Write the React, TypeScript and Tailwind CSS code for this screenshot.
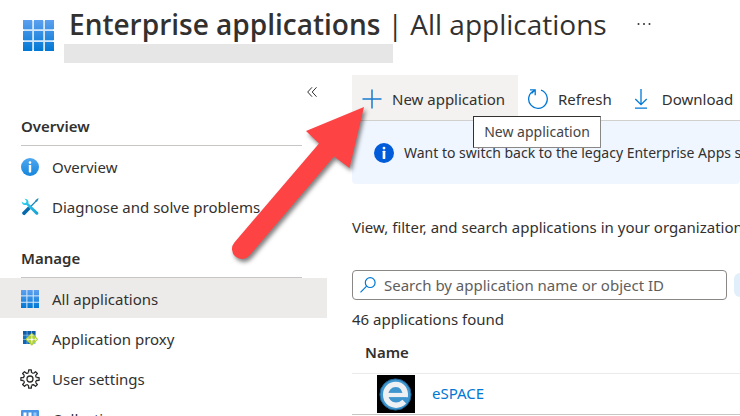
import type { ReactNode } from "react";

function GridIcon({ id, className }: { id: string; className?: string }) {
  const cells = [0, 11, 22];
  return (
    <svg viewBox="0 0 31 31" className={className} aria-hidden="true">
      <defs>
        <linearGradient id={id} x1="0" y1="31" x2="0" y2="0" gradientUnits="userSpaceOnUse">
          <stop offset="0" stopColor="#0078d4" />
          <stop offset="1" stopColor="#5ea0ef" />
        </linearGradient>
      </defs>
      <rect x="1" y="1" width="29" height="29" fill="#d3e6f8" />
      {cells.map((x) =>
        cells.map((y) => (
          <rect key={`${x}-${y}`} x={x} y={y} width="9.2" height="9.2" fill={`url(#${id})`} />
        ))
      )}
    </svg>
  );
}

function InfoIcon({ className, top, bottom }: { className?: string; top: string; bottom: string }) {
  const id = `info-${top.slice(1)}`;
  return (
    <svg viewBox="0 0 18 18" className={className} aria-hidden="true">
      <defs>
        <linearGradient id={id} x1="0" y1="0" x2="0" y2="1">
          <stop offset="0" stopColor={top} />
          <stop offset="1" stopColor={bottom} />
        </linearGradient>
      </defs>
      <circle cx="9" cy="9" r="9" fill={`url(#${id})`} />
      <circle cx="9" cy="4.6" r="1.3" fill="#fff" />
      <rect x="7.8" y="7" width="2.4" height="7.4" rx="0.4" fill="#fff" />
    </svg>
  );
}

function ToolsIcon() {
  return (
    <svg viewBox="0 0 18 18" className="size-[18px]" aria-hidden="true">
      <defs>
        <linearGradient id="wrench" x1="0" y1="0" x2="1" y2="1">
          <stop offset="0" stopColor="#32d4f5" />
          <stop offset="1" stopColor="#1a9fd0" />
        </linearGradient>
      </defs>
      <path d="M17.6 0.7 L17 0.3 L14.6 2 L14 3.2 L8 9.2 L9 10.2 L15 4.1 L16.2 3.5 Z" fill="#1b87b8" />
      <path d="M7.1 8.5 L9.6 11 L4 16.8 C2.8 18 0.2 15.6 1.4 14.3 Z" fill="#0669ab" />
      <path
        d="M5.2 0.9 C7.2 1.6 7.9 3.5 7.3 5.3 L17 14.2 C18.2 15.5 16.5 17.6 14.9 16.5 L5.5 6.9 C3.2 7.7 0.8 6.3 0.6 3.4 L3.1 5.2 L5 4.8 L5.5 3 L3.5 0.8 Z"
        fill="url(#wrench)"
      />
    </svg>
  );
}

function ProxyIcon() {
  return (
    <svg viewBox="0 0 18 18" className="size-[18px]" aria-hidden="true">
      <rect x="2" y="1" width="12.5" height="13" fill="#8fc3ea" />
      <path d="M2 1h3.7v3.7H2zM6.4 1h3.7v3.7H6.4zM10.8 1h3.7v3.7h-3.7z" fill="#0f5ba7" />
      <path d="M2 5.4h3.7v3.9H2zM6.4 5.4h3.7v3.9H6.4zM10.8 5.4h3.7v3.9h-3.7z" fill="#1272c4" />
      <path d="M2 10h3.7v4H2zM6.4 10h3.7v4H6.4z" fill="#0f66b5" />
      <path d="M10.8 2.7 17.2 9.2 10.8 15.8 4.4 9.2Z" fill="#b1d137" />
      <path
        d="M10.8 4.5v3.5M9.5 5.8l1.3-1.3 1.3 1.3M6.2 9.4h9.2M7.5 8.2 6.2 9.4l1.3 1.2M14.1 8.2l1.3 1.2-1.3 1.2M10.8 9.4v3.9"
        fill="none"
        stroke="#fff"
        strokeWidth="0.7"
      />
      <circle cx="10.8" cy="9.4" r="1.2" fill="#fff" />
    </svg>
  );
}

function GearIcon() {
  const teeth = [0, 45, 90, 135, 180, 225, 270, 315];
  return (
    <svg viewBox="0 0 20 20" className="size-5" aria-hidden="true">
      <g fill="none" stroke="#2b2a29" strokeWidth="1.3" strokeLinejoin="round">
        {teeth.map((angle) => (
          <path
            key={angle}
            transform={`rotate(${angle} 10 10)`}
            d="M8.5 3.4 8.7 0.9h2.6l.2 2.5q1.2 1.2 2.1.9"
          />
        ))}
        <circle cx="10" cy="10" r="3" />
      </g>
    </svg>
  );
}

function CollectionsIcon() {
  return (
    <svg viewBox="0 0 18 18" className="size-[18px]" aria-hidden="true">
      <rect width="18" height="18" rx="1" fill="#4a96e6" />
      <path d="M2.5 2.5h3v13h-3zM7.5 2.5h3v13h-3z" fill="#fff" />
      <path d="M12.5 2.5h3v13h-3z" fill="#9cc8f5" />
    </svg>
  );
}

function PlusIcon() {
  return (
    <svg viewBox="0 0 20 20" className="size-5" fill="none" stroke="#1a7bd0" strokeWidth="1.5" aria-hidden="true">
      <path d="M10 0.5v19M0.5 10h19" />
    </svg>
  );
}

function RefreshIcon() {
  return (
    <svg viewBox="0 0 20 20" className="size-5" fill="none" stroke="#0078d4" strokeWidth="1.3" aria-hidden="true">
      <path d="M13 1.2a9.3 9.3 0 1 1-6.8.3" />
      <path d="M2 0.9h5.2v5.3M7 1 3.5 4.5" />
    </svg>
  );
}

function DownloadIcon() {
  return (
    <svg viewBox="0 0 14 20" className="h-5 w-3.5" fill="none" stroke="#0078d4" strokeWidth="1.3" aria-hidden="true">
      <path d="M7 0v15.5M1.3 10 7 15.7l5.7-5.7M1 19.2h12" />
    </svg>
  );
}

function SearchIcon() {
  return (
    <svg viewBox="0 0 16 16" className="size-4 shrink-0" fill="none" stroke="#0078d4" strokeWidth="1.2" aria-hidden="true">
      <circle cx="10.2" cy="5.6" r="4.9" />
      <path d="M6.6 9.2 0.5 15.3" />
    </svg>
  );
}

function EspaceLogo() {
  return (
    <svg viewBox="0 0 38 38" className="size-[38px]" aria-hidden="true">
      <rect width="38" height="38" fill="#000" />
      <circle cx="18.5" cy="19.5" r="15.6" fill="#3f96cf" stroke="#1d5f8f" strokeWidth="1" />
      <g fill="none" stroke="#eef1f3">
        <path d="M9 20h21.3" strokeWidth="4.2" />
        <path
          d="M28.2 22c.8-8-3.4-12.6-9.5-12.6-5.8 0-10 4.3-10 10.3s4.3 10.5 10.4 10.5c3.2 0 5.8-1.3 8.2-3.6"
          strokeWidth="5.4"
        />
      </g>
    </svg>
  );
}

function Arrow() {
  return (
    <svg
      viewBox="0 0 150 170"
      className="pointer-events-none absolute left-[225px] top-[100px] h-[170px] w-[150px]"
      aria-hidden="true"
    >
      <path
        d="M139 7 81 31 94 43.5 9.4 142.5A9.8 9.8 0 0 0 24.5 155.5L109 56.5 124.5 68Z"
        fill="#fe4344"
        className="drop-shadow-[2px_3px_2px_rgba(0,0,0,0.5)]"
      />
    </svg>
  );
}

function NavGroup({ title, children }: { title: string; children: ReactNode }) {
  return (
    <section>
      <h2 className="ml-[21px] mr-[25px] h-[30px] border-b border-[#c8c6c4] font-semibold leading-5">
        {title}
      </h2>
      <ul>{children}</ul>
    </section>
  );
}

function NavItem({ label, icon, active }: { label: string; icon: ReactNode; active?: boolean }) {
  return (
    <li>
      <a
        href="#"
        aria-current={active ? "page" : undefined}
        className={
          active
            ? "flex h-10 items-center gap-3 bg-[#edebe9] pl-5 pt-0.5"
            : "flex h-10 items-center gap-3 pl-5 pt-0.5"
        }
      >
        <span className="flex w-5 justify-center">{icon}</span>
        {label}
      </a>
    </li>
  );
}

function Sidebar() {
  return (
    <nav className="w-[327px] shrink-0">
      <div className="flex h-[41px] items-start justify-end pr-[5px] pt-[7px]">
        <button type="button" aria-label="Collapse menu" className="flex size-5 items-center justify-center">
          <svg viewBox="0 0 10 10" className="size-2.5" fill="none" stroke="#323130" aria-hidden="true">
            <path d="M5 0.3 0.7 5 5 9.7M9.5 0.3 5.2 5l4.3 4.7" />
          </svg>
        </button>
      </div>
      <div className="flex flex-col gap-[22px]">
        <NavGroup title="Overview">
          <NavItem
            label="Overview"
            icon={<InfoIcon className="size-[18px]" top="#4fa8f0" bottom="#1585dc" />}
          />
          <NavItem label="Diagnose and solve problems" icon={<ToolsIcon />} />
        </NavGroup>
        <NavGroup title="Manage">
          <NavItem label="All applications" icon={<GridIcon id="nav-grid" className="size-[18px]" />} active />
          <NavItem label="Application proxy" icon={<ProxyIcon />} />
          <NavItem label="User settings" icon={<GearIcon />} />
          <NavItem label="Collections" icon={<CollectionsIcon />} />
        </NavGroup>
      </div>
    </nav>
  );
}

function Toolbar() {
  return (
    <div className="flex h-[46px] border-b border-[#d2d0ce]">
      <div className="relative">
        <button type="button" className="flex h-full w-[166px] items-center gap-2.5 bg-[#f3f2f1] pl-2.5 pt-0.5">
          <PlusIcon />
          New application
        </button>
        <div
          role="tooltip"
          className="absolute left-[121px] top-[41px] z-10 flex h-8 w-32 items-center justify-center whitespace-nowrap border border-[#8a8886] border-l-[#323130] border-t-[#323130] bg-white text-sm text-[#444]"
        >
          New application
        </div>
      </div>
      <button type="button" className="flex items-center gap-2.5 pl-2.5 pt-0.5">
        <RefreshIcon />
        Refresh
      </button>
      <button type="button" className="flex items-center gap-3.5 pl-[22px] pt-0.5">
        <DownloadIcon />
        Download
      </button>
    </div>
  );
}

function AppTable() {
  return (
    <table className="w-full border-collapse">
      <thead>
        <tr className="h-10 border-b border-[#edebe9]">
          <th scope="col" className="pb-0.5 pl-[13px] text-left font-semibold">
            Name
          </th>
        </tr>
      </thead>
      <tbody>
        <tr className="h-[41px] border-b border-[#c8c6c4]">
          <td>
            <div className="flex items-center gap-[17px] pl-[25px]">
              <EspaceLogo />
              <a href="#" className="pb-0.5 text-[#0078d4]">
                eSPACE
              </a>
            </div>
          </td>
        </tr>
      </tbody>
    </table>
  );
}

export default function App() {
  return (
    <div className="relative h-screen overflow-hidden bg-white font-['Noto_Sans','Open_Sans',sans-serif] text-[15px] leading-5 text-[#323130]">
      <header className="flex h-[75px] items-start">
        <GridIcon id="header-grid" className="ml-[23px] mt-5 size-[31px] shrink-0" />
        <div className="ml-2.5 shrink-0">
          <div className="flex h-11 items-center gap-[30px] pl-[5px] pt-1">
            <h1 className="whitespace-nowrap font-['Open_Sans',sans-serif] text-[28px] leading-10">
              <span className="font-semibold">Enterprise applications</span> | All applications
            </h1>
            <button type="button" aria-label="More options" className="flex h-8 items-center">
              <svg viewBox="0 0 14 4" className="h-1 w-3.5" fill="#323130" aria-hidden="true">
                <circle cx="1.5" cy="2" r="1" />
                <circle cx="7" cy="2" r="1" />
                <circle cx="12.5" cy="2" r="1" />
              </svg>
            </button>
          </div>
          <div className="h-[19px] w-[329px] bg-[#e7e6e6]" />
        </div>
      </header>

      <div className="flex">
        <Sidebar />
        <main className="ml-[25px] min-w-0 flex-1 whitespace-nowrap">
          <Toolbar />
          <div className="flex h-[63px] items-center gap-2.5 overflow-hidden rounded-b-sm bg-[#f0f6ff] pl-[22px] text-sm">
            <InfoIcon className="size-5 shrink-0" top="#015cda" bottom="#015cda" />
            Want to switch back to the legacy Enterprise Apps search experience?
          </div>
          <p className="mt-[33px]">View, filter, and search applications in your organization</p>
          <div className="mt-[33px] flex gap-[7px]">
            <label className="flex h-[30px] min-w-0 flex-1 items-center gap-2 rounded-sm border border-[#8a8886] pl-[7px]">
              <SearchIcon />
              <input
                type="text"
                aria-label="Search applications"
                placeholder="Search by application name or object ID"
                className="min-w-0 flex-1 outline-none placeholder:text-[#605e5c]"
              />
            </label>
            <div className="mt-[3px] h-6 w-1.5 rounded-l-full bg-[#e1effa]" />
          </div>
          <p className="mt-[9px]">46 applications found</p>
          <div className="mt-1">
            <AppTable />
          </div>
        </main>
      </div>

      <Arrow />
    </div>
  );
}
